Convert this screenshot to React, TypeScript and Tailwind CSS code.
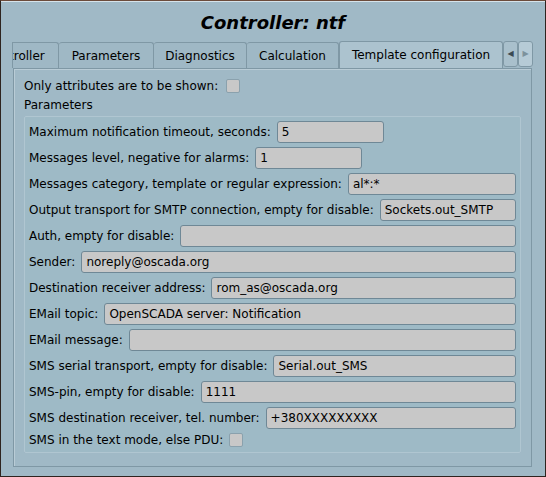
import React from "react";

type Row = { label: string; value?: string; fixed?: boolean; check?: boolean };

const ROWS: Row[] = [
  { label: "Maximum notification timeout, seconds:", value: "5", fixed: true },
  { label: "Messages level, negative for alarms:", value: "1", fixed: true },
  { label: "Messages category, template or regular expression:", value: "al*:*" },
  { label: "Output transport for SMTP connection, empty for disable:", value: "Sockets.out_SMTP" },
  { label: "Auth, empty for disable:", value: "" },
  { label: "Sender:", value: "noreply@oscada.org" },
  { label: "Destination receiver address:", value: "rom_as@oscada.org" },
  { label: "EMail topic:", value: "OpenSCADA server: Notification" },
  { label: "EMail message:", value: "" },
  { label: "SMS serial transport, empty for disable:", value: "Serial.out_SMS" },
  { label: "SMS-pin, empty for disable:", value: "1111" },
  { label: "SMS destination receiver, tel. number:", value: "+380XXXXXXXXX" },
  { label: "SMS in the text mode, else PDU:", check: true },
];

const TABS: { name: string; w: string }[] = [
  { name: "Parameters", w: "w-[95px]" },
  { name: "Diagnostics", w: "w-[93px]" },
  { name: "Calculation", w: "w-[92px]" },
];

function Checkbox() {
  return <span className="inline-block h-[14px] w-[14px] rounded-[2px] border border-[#8aa1ad] bg-[#c8c8c8]" />;
}

function Field({ value, fixed }: { value: string; fixed?: boolean }) {
  return (
    <div
      className={
        "flex h-[22px] items-center rounded-[3px] border border-[#6f8896] bg-[#c8c8c8] px-[4px] " +
        (fixed ? "w-[107px]" : "flex-1")
      }
    >
      {value}
    </div>
  );
}

export default function App() {
  return (
    <div
      className="h-[477px] w-[546px] overflow-hidden border border-[#2e241f] border-t-[#6b4b3b] bg-[#a0b9c6] text-[12px] text-black"
      style={{ fontFamily: '"DejaVu Sans", sans-serif' }}
    >
      <div className="flex h-full flex-col border-t border-[#d6e3ea] pl-[1px] pr-[1px]">
        {/* Titulo */}
        <div className="flex h-[39px] items-center justify-center pt-[2px] text-[18px] font-bold italic">
          Controller: ntf
        </div>

        {/* Abas */}
        <div className="flex h-[27px] items-end pl-[10px]">
          <div className="flex h-[26px] w-[47px] items-center overflow-hidden rounded-tr-[3px] border border-b-0 border-[#7f98a5] bg-[#9fb8c5]">
            <span className="-ml-[4px] whitespace-nowrap">troller</span>
          </div>
          {TABS.map((t) => (
            <div
              key={t.name}
              className={
                "flex h-[26px] items-center justify-center rounded-t-[3px] border border-b-0 border-l-0 border-[#7f98a5] bg-[#9fb8c5] " +
                t.w
              }
            >
              {t.name}
            </div>
          ))}
          <div className="flex h-[27px] w-[164px] items-center justify-center rounded-t-[3px] border border-b-0 border-[#7f98a5] bg-[#acc3cf]">
            Template configuration
          </div>
          <div className="flex h-[26px] self-start">
            <div className="flex w-[15px] items-center justify-center rounded-[3px] border border-[#7f98a5] bg-[#a9c0cc] text-[8px] text-[#3a4a52]">
              ◀
            </div>
            <div className="flex w-[15px] items-center justify-center rounded-[3px] border border-[#7f98a5] bg-[#b6cbd6] text-[8px] text-[#7d929c]">
              ▶
            </div>
          </div>
        </div>

        {/* Painel */}
        <div className="ml-[11px] mr-[12px] flex h-[399px] flex-col border border-[#7f98a5] pl-[10px] pr-[10px] shadow-[inset_1px_1px_0_#b9ccd6]">
          <div className="mt-[9px] flex h-[16px] items-center gap-[8px]">
            <span>Only attributes are to be shown:</span>
            <Checkbox />
          </div>
          <div className="mt-[3px] flex h-[16px] items-center">Parameters</div>

          <div className="mt-[3px] flex flex-col gap-[4px] rounded-[2px] border border-[#b0c6d1] bg-[#9ebac6] px-[4px] pb-[5px] pt-[4px]">
            {ROWS.map((r) =>
              r.check ? (
                <div key={r.label} className="flex h-[14px] items-center gap-[6px]">
                  <span>{r.label}</span>
                  <Checkbox />
                </div>
              ) : (
                <div key={r.label} className="flex h-[22px] items-center gap-[6px]">
                  <span className="whitespace-nowrap">{r.label}</span>
                  <Field value={r.value ?? ""} fixed={r.fixed} />
                </div>
              )
            )}
          </div>
        </div>
      </div>
    </div>
  );
}
